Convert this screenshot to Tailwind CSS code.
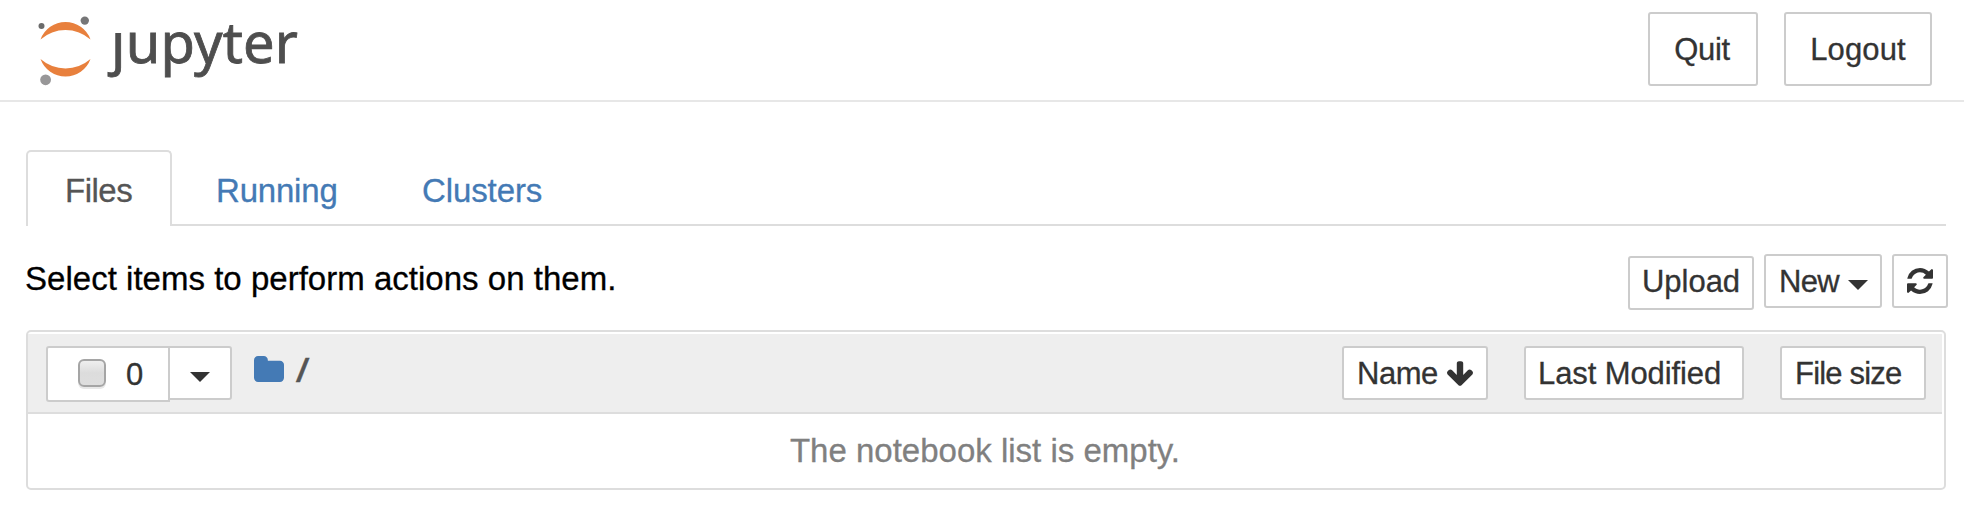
<!DOCTYPE html>
<html lang="en">
<head>
<meta charset="utf-8">
<title>Home</title>
<script src="https://cdn.jsdelivr.net/npm/@tailwindcss/browser@4"></script>
</head>
<body class="h-[530px] overflow-hidden bg-white font-['Liberation_Sans',Arial,sans-serif] text-[33px] leading-none whitespace-nowrap text-black [-webkit-text-stroke:0.3px]">
<header class="flex h-[102px] items-start justify-between border-b-2 border-[#e7e7e7] pr-8">
  <svg class="h-[100px] w-[320px]" viewBox="0 0 320 100" role="img" aria-label="jupyter">
    <path fill="#e8803d" d="M40.500 39.500A26.600 26.600 0 0 1 90.500 39.500A38 38 0 0 0 40.500 39.500ZM40.500 59A26.600 26.600 0 0 0 90.500 59A38 38 0 0 1 40.500 59Z"/>
    <circle cx="84.8" cy="20.6" r="4.2" fill="#767677"/>
    <circle cx="41.5" cy="26" r="3" fill="#6b6b6b"/>
    <circle cx="45.6" cy="79.8" r="5.4" fill="#989798"/>
    <text x="111" y="63" font-family="Noto Sans, sans-serif" font-size="56" letter-spacing="0" textLength="187" fill="#4e4e4e" stroke="#4e4e4e" stroke-width="0.8">jupyter</text>
    <rect x="106" y="12" width="20" height="21" fill="#fff"/>
  </svg>
  <div class="flex gap-[26px] pt-3 text-[31px] tracking-[0.1px] text-[#333]">
    <button class="h-[74px] w-[110px] rounded-[3px] border-2 border-[#ccc] pr-0.5 tracking-[-0.4px]">Quit</button>
    <button class="h-[74px] w-[148px] rounded-[3px] border-2 border-[#ccc]">Logout</button>
  </div>
</header>
<main class="pr-[18px] pl-[26px]">
  <nav class="mt-12 flex h-[76px] border-b-2 border-[#ddd]">
    <a class="h-[76px] w-[146px] rounded-t-[5px] border-2 border-b-0 border-[#ddd] bg-white pt-[22px] pl-[37px] tracking-[-0.5px] text-[#555]">Files</a>
    <a class="w-[205px] pt-6 pl-[44px] tracking-[-0.2px] text-[#447ab5]">Running</a>
    <a class="pt-6 pl-[45px] tracking-[-0.1px] text-[#447ab5]">Clusters</a>
  </nav>
  <div class="-mr-0.5 mt-7 flex h-[76px] items-start text-[#333]">
    <p class="mt-2 -ml-px flex-1 text-black tracking-[0.02px]">Select items to perform actions on them.</p>
    <div class="flex items-start text-[31px]">
      <button class="mt-0.5 mr-2.5 h-[54px] w-[126px] rounded-[3px] border-2 border-[#ccc] pb-[3px]">Upload</button>
      <button class="mr-2.5 flex h-[54px] w-[118px] items-center rounded-[3px] border-2 border-[#ccc] pl-[13px] tracking-[-0.7px]">New<svg class="mt-[7px] ml-[9px] h-2.5 w-5" viewBox="0 0 20 10"><path fill="#333" d="M0 0h20L10 10z"/></svg></button>
      <button class="flex h-[54px] w-14 items-center justify-center rounded-[3px] border-2 border-[#ccc]" aria-label="Refresh"><svg class="size-[26px]" viewBox="0 0 1536 1536"><path fill="#333" d="M1511 928q0 5-1 7-64 268-268 434.500t-478 166.500q-146 0-282.500-55t-243.500-157l-129 129q-19 19-45 19t-45-19-19-45v-448q0-26 19-45t45-19h448q26 0 45 19t19 45-19 45l-137 137q71 66 161 102t187 36q134 0 250-65t186-179q11-17 53-117 8-23 30-23h192q13 0 22.500 9.500t9.500 22.500zm25-800v448q0 26-19 45t-45 19h-448q-26 0-45-19t-19-45 19-45l138-138q-148-137-349-137-134 0-250 65t-186 179q-11 17-53 117-8 23-30 23h-199q-13 0-22.500-9.500t-9.500-22.500v-7q65-268 270-434.500t480-166.500q146 0 284 55.500t245 156.500l130-129q19-19 45-19t45 19 19 45z"/></svg></button>
    </div>
  </div>
  <section class="h-[160px] rounded-[5px] border-2 border-[#ddd] pt-0.5 pr-0.5">
    <div class="flex h-20 items-start border-b-2 border-[#ddd] bg-[#eee] pt-3 pr-4 pl-[18px] text-[31px] text-[#333]">
      <div class="flex h-14 w-[124px] items-center rounded-l-[3px] border-2 border-[#ccc] bg-white pl-[30px]">
        <span class="-mt-0.5 size-7 rounded-[6px] border-2 border-[#a5a5a5] bg-linear-to-b from-[#efefef] via-[#dcdcdc] to-[#dedede] shadow-[0_2px_0_#e8e8e8]"></span>
        <span class="ml-5">0</span>
      </div>
      <button class="-ml-0.5 flex h-[54px] w-16 items-center justify-center rounded-r-[3px] border-2 border-[#ccc] bg-white" aria-label="Select"><svg class="mt-2 h-2.5 w-5" viewBox="0 0 20 10"><path fill="#333" d="M0 0h20L10 10z"/></svg></button>
      <svg class="mt-2.5 ml-[22px] h-[26px] w-[30px]" viewBox="0 128 1664 1408" preserveAspectRatio="none"><path fill="#447ab5" d="M1664 608v704q0 92-66 158t-158 66h-1216q-92 0-158-66t-66-158v-960q0-92 66-158t158-66h320q92 0 158 66t66 158v32h672q92 0 158 66t66 158z"/></svg>
      <span class="mt-[5px] ml-3 h-10 origin-left scale-x-[1.45] text-[33px] leading-10 text-[#555]">/</span>
      <div class="ml-auto flex gap-9">
        <button class="flex h-[54px] w-[146px] items-center rounded-[3px] border-2 border-[#ccc] bg-white pl-[13px] tracking-[-0.5px]">Name<svg class="ml-[9px] h-[25px] w-[26px]" viewBox="53 0 1558 1483"><path fill="#333" d="M1611 704q0 53-37 90l-651 652q-39 37-91 37-53 0-90-37l-651-652q-38-36-38-90 0-53 38-91l74-75q39-37 91-37 53 0 90 37l294 294v-704q0-52 38-90t90-38h128q52 0 90 38t38 90v704l294-294q37-37 90-37 52 0 91 37l75 75q37 39 37 91z"/></svg></button>
        <button class="h-[54px] w-[220px] rounded-[3px] border-2 border-[#ccc] bg-white pl-3 text-left tracking-[-0.1px]">Last Modified</button>
        <button class="h-[54px] w-[146px] rounded-[3px] border-2 border-[#ccc] bg-white pl-[13px] text-left tracking-[-0.8px]">File size</button>
      </div>
    </div>
    <p class="mt-5 text-center text-[#808080]">The notebook list is empty.</p>
  </section>
</main>
</body>
</html>
